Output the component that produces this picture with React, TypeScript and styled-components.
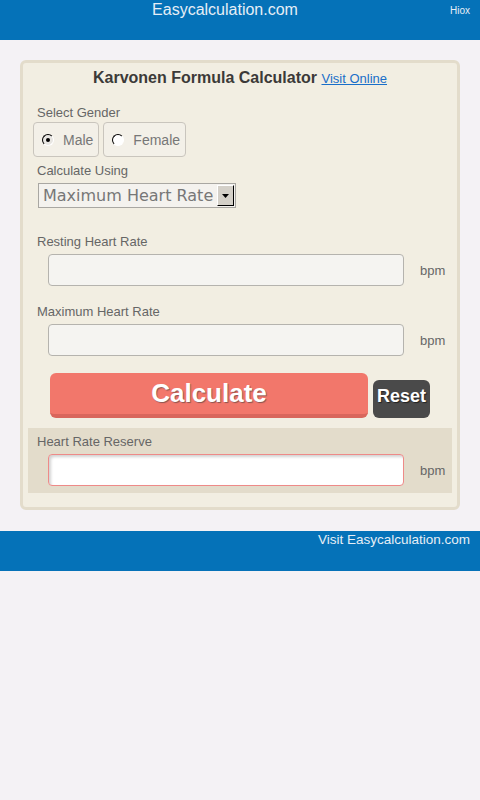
import React, { useState } from 'react';
import styled, { createGlobalStyle } from 'styled-components';

const GlobalStyle = createGlobalStyle`
  body {
    margin: 0;
    background: #f4f2f5;
    font-family: "Liberation Sans", Arial, sans-serif;
  }
`;

const App = () => {
  const [gender, setGender] = useState('male');

  return (
    <>
      <GlobalStyle />
      <SHeader>
        <SSiteTitle>Easycalculation.com</SSiteTitle>
        <SHiox>Hiox</SHiox>
      </SHeader>

      <SCard>
        <STitle>
          Karvonen Formula Calculator <SLink href="#">Visit Online</SLink>
        </STitle>

        <SGroup indent={14} top={17}>
          <SLabel>Select Gender</SLabel>
        </SGroup>
        <SRadioGroup>
          <SRadioBox onClick={() => setGender('male')}>
            <SRadio checked={gender === 'male'} />
            Male
          </SRadioBox>
          <SRadioBox onClick={() => setGender('female')}>
            <SRadio checked={gender === 'female'} />
            Female
          </SRadioBox>
        </SRadioGroup>

        <SGroup indent={14} top={6}>
          <SLabel>Calculate Using</SLabel>
        </SGroup>
        <SSelect>
          <SSelectText>Maximum Heart Rate</SSelectText>
          <SSelectButton>
            <svg width="7" height="4" viewBox="0 0 7 4">
              <path d="M0 0 H7 L3.5 4 Z" fill="#000" />
            </svg>
          </SSelectButton>
        </SSelect>

        <SGroup indent={14} top={26}>
          <SLabel>Resting Heart Rate</SLabel>
          <SInputRow>
            <SInput />
            <SUnit>bpm</SUnit>
          </SInputRow>
        </SGroup>

        <SGroup indent={14} top={18}>
          <SLabel>Maximum Heart Rate</SLabel>
          <SInputRow>
            <SInput />
            <SUnit>bpm</SUnit>
          </SInputRow>
        </SGroup>

        <SButtonRow>
          <SCalcButton>Calculate</SCalcButton>
          <SResetButton>Reset</SResetButton>
        </SButtonRow>

        <SResult>
          <SGroup indent={9} top={0}>
            <SLabel>Heart Rate Reserve</SLabel>
            <SInputRow>
              <SInput result />
              <SUnit>bpm</SUnit>
            </SInputRow>
          </SGroup>
        </SResult>
      </SCard>

      <SFooter>Visit Easycalculation.com</SFooter>
    </>
  );
};

export default App;

const SHeader = styled.div`
  height: 40px;
  background: #0572b8;
  display: flex;
  align-items: flex-start;
  color: #e6eef6;
`;

const SSiteTitle = styled.div`
  flex: 1;
  text-align: center;
  font-size: 16px;
  line-height: 19px;
`;

const SHiox = styled.div`
  font-size: 10px;
  padding: 5px 10px 0 0;
`;

const SCard = styled.div`
  margin: 20px 20px 0;
  border: 3px solid #e3dccb;
  border-radius: 6px;
  background: #f2eee2;
  padding-bottom: 14px;
`;

const STitle = styled.div`
  margin-top: 5px;
  text-align: center;
  font-size: 16px;
  line-height: 19px;
  font-weight: bold;
  color: #3c3a38;
`;

const SLink = styled.a`
  font-size: 13px;
  font-weight: normal;
  color: #1a6fc9;
  text-decoration: underline;
`;

const SGroup = styled.div<{ indent: number; top: number }>`
  padding-left: ${(p) => p.indent}px;
  margin-top: ${(p) => p.top}px;
`;

const SLabel = styled.div`
  font-size: 13px;
  line-height: 16px;
  color: #666;
`;

const SRadioGroup = styled.div`
  display: flex;
  gap: 4px;
  margin-top: 1px;
  padding-left: 10px;
`;

const SRadioBox = styled.div`
  box-sizing: border-box;
  height: 35px;
  display: flex;
  align-items: center;
  gap: 9px;
  padding: 0 5px 0 8px;
  border: 1px solid #c9c5bd;
  border-radius: 4px;
  background: #f3f0e8;
  font-size: 14px;
  color: #777;
  cursor: pointer;
`;

const SRadio = styled.span<{ checked: boolean }>`
  width: 10px;
  height: 10px;
  border-radius: 50%;
  border: 1px solid;
  border-color: #000 #fff #fff #000;
  background: ${(p) => (p.checked ? '#e8e6e2' : '#fff')};
  display: flex;
  align-items: center;
  justify-content: center;
  &::after {
    content: '';
    width: 4px;
    height: 4px;
    border-radius: 50%;
    background: ${(p) => (p.checked ? '#000' : 'transparent')};
  }
`;

const SSelect = styled.div`
  box-sizing: border-box;
  margin: 4px 0 0 15px;
  width: 198px;
  height: 25px;
  border: 1px solid #a9a7a2;
  background: #f4f2ee;
  display: flex;
  align-items: center;
  justify-content: space-between;
  padding: 0 1px 0 4px;
`;

const SSelectText = styled.span`
  font-family: "DejaVu Sans", sans-serif;
  font-size: 16px;
  color: #777;
  white-space: nowrap;
`;

const SSelectButton = styled.span`
  box-sizing: border-box;
  width: 17px;
  height: 21px;
  background: #d4d0c8;
  border-top: 1px solid #fff;
  border-left: 1px solid #fff;
  border-right: 1px solid #000;
  border-bottom: 1px solid #000;
  display: flex;
  align-items: center;
  justify-content: center;
`;

const SInputRow = styled.div`
  display: flex;
  align-items: center;
  gap: 16px;
  margin-top: 4px;
  padding-left: 11px;
`;

const SInput = styled.div<{ result?: boolean }>`
  width: 354px;
  height: 30px;
  border: 1px solid ${(p) => (p.result ? '#ee8a88' : '#b5b3ae')};
  border-radius: 4px;
  background: ${(p) => (p.result ? '#fff' : '#f5f4f1')};
  box-shadow: ${(p) => (p.result ? 'inset 2px 2px 3px rgba(0,0,0,0.18)' : 'none')};
`;

const SUnit = styled.span`
  font-size: 13px;
  color: #666;
`;

const SButtonRow = styled.div`
  display: flex;
  align-items: flex-end;
  gap: 5px;
  margin-top: 17px;
  padding-left: 27px;
`;

const SCalcButton = styled.button`
  width: 318px;
  height: 45px;
  border: none;
  border-bottom: 4px solid #d9665c;
  border-radius: 6px;
  background: #f2776b;
  color: #fff;
  font-family: "Liberation Sans", Arial, sans-serif;
  font-size: 26px;
  font-weight: bold;
  padding: 0 0 1px;
  text-shadow: 1px 1px 1px #8a5550;
  cursor: pointer;
`;

const SResetButton = styled.button`
  width: 57px;
  height: 38px;
  border: none;
  border-radius: 6px;
  background: #4a4a4a;
  color: #fff;
  font-family: "Liberation Sans", Arial, sans-serif;
  font-size: 18px;
  font-weight: bold;
  padding: 0 0 6px;
  text-shadow: 1px 1px 1px #222;
  cursor: pointer;
`;

const SResult = styled.div`
  margin: 10px 5px 0;
  background: #e3dccb;
  padding: 6px 0 7px;
`;

const SFooter = styled.div`
  margin-top: 21px;
  height: 40px;
  background: #0572b8;
  color: #e6eef6;
  font-size: 13.5px;
  line-height: 18px;
  text-align: right;
  padding-right: 10px;
  box-sizing: border-box;
`;
